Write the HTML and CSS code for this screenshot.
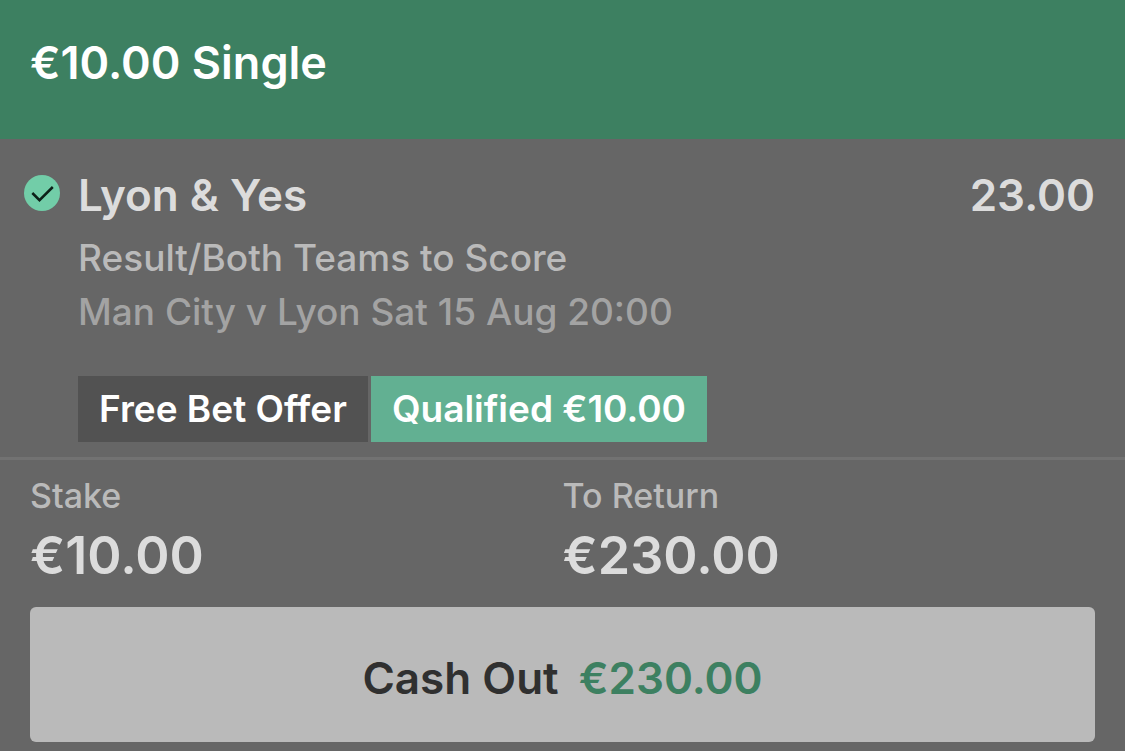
FILE: index.html
```html
<!DOCTYPE html>
<html lang="en">
<head>
    <meta charset="utf-8">
    <title>My Bets</title>
    <meta name="viewport" content="width=device-width, initial-scale=1">
    <link rel="stylesheet" href="styles.css">
</head>

<body>
    <header class="bet-header">
        <h1>€10.00 Single</h1>
    </header>

    <main>
        <section class="selection">
            <svg class="tick" viewBox="0 0 36 36" aria-hidden="true">
                <circle cx="18" cy="18" r="18" fill="#72cda8"/>
                <path d="M8.3 18 L15.5 25.2 L28.8 12" fill="none" stroke="#0c2018" stroke-width="2.5"/>
            </svg>
            <div class="details">
                <div class="pick">
                    <h2>Lyon &amp; Yes</h2>
                    <span class="odds">23.00</span>
                </div>
                <p class="market">Result/Both Teams to Score</p>
                <p class="fixture">Man City v Lyon Sat 15 Aug 20:00</p>
                <div class="offer">
                    <span class="offer-name">Free Bet Offer</span>
                    <span class="offer-status">Qualified €10.00</span>
                </div>
            </div>
        </section>

        <section class="totals">
            <dl>
                <dt>Stake</dt>
                <dd>€10.00</dd>
            </dl>
            <dl>
                <dt>To Return</dt>
                <dd>€230.00</dd>
            </dl>
        </section>

        <button class="cash-out" type="button">
            <span>Cash Out</span>
            <span class="amount">€230.00</span>
        </button>
    </main>
</body>
</html>
```

FILE: styles.css
```css
body {
    margin: 0;
    font-family: Inter, sans-serif;
    font-weight: 600;
    background-color: #666;
    color: #dcdcdc;
}
h1, h2, p, dl, dd {
    margin: 0;
    font-weight: inherit;
}
.bet-header {
    padding: 35px 30px 48px;
    background-color: #3d8061;
    color: #fff;
}
.bet-header h1 {
    font-size: 45px;
    line-height: 56px;
}
.selection {
    display: flex;
    gap: 18px;
    padding: 28px 30px 15px 24px;
    border-bottom: 3px solid #727272;
}
.tick {
    flex: none;
    width: 36px;
    height: 36px;
    margin-top: 8px;
}
.details {
    flex: 1;
}
.pick {
    display: flex;
    justify-content: space-between;
    font-size: 44px;
    line-height: 56px;
}
.pick h2 {
    font-size: inherit;
}
.market, .fixture {
    font-size: 37px;
    font-weight: 500;
    line-height: 54px;
}
.market {
    margin-top: 8px;
    color: #bababa;
}
.fixture {
    color: #a3a3a3;
}
.offer {
    display: flex;
    gap: 3px;
    margin-top: 37px;
    font-size: 37px;
    line-height: 66px;
    color: #fff;
}
.offer span {
    padding: 0 21px;
}
.offer-name {
    background-color: #525252;
}
.offer-status {
    background-color: #62b092;
}
.totals {
    display: grid;
    grid-template-columns: 1fr 1fr;
    padding: 16px 30px 11px;
}
.totals dt {
    font-size: 34px;
    font-weight: 500;
    line-height: 40px;
    color: #bababa;
}
.totals dd {
    font-size: 52px;
    line-height: 80px;
}
.cash-out {
    display: flex;
    justify-content: center;
    gap: 20px;
    width: calc(100% - 60px);
    margin: 0 30px 9px;
    padding: 43px 0 36px;
    border: none;
    border-radius: 6px;
    background-color: #bababa;
    color: #303030;
    font: inherit;
    font-size: 44px;
    line-height: 56px;
    cursor: pointer;
}
.amount {
    color: #3d8061;
}
```
